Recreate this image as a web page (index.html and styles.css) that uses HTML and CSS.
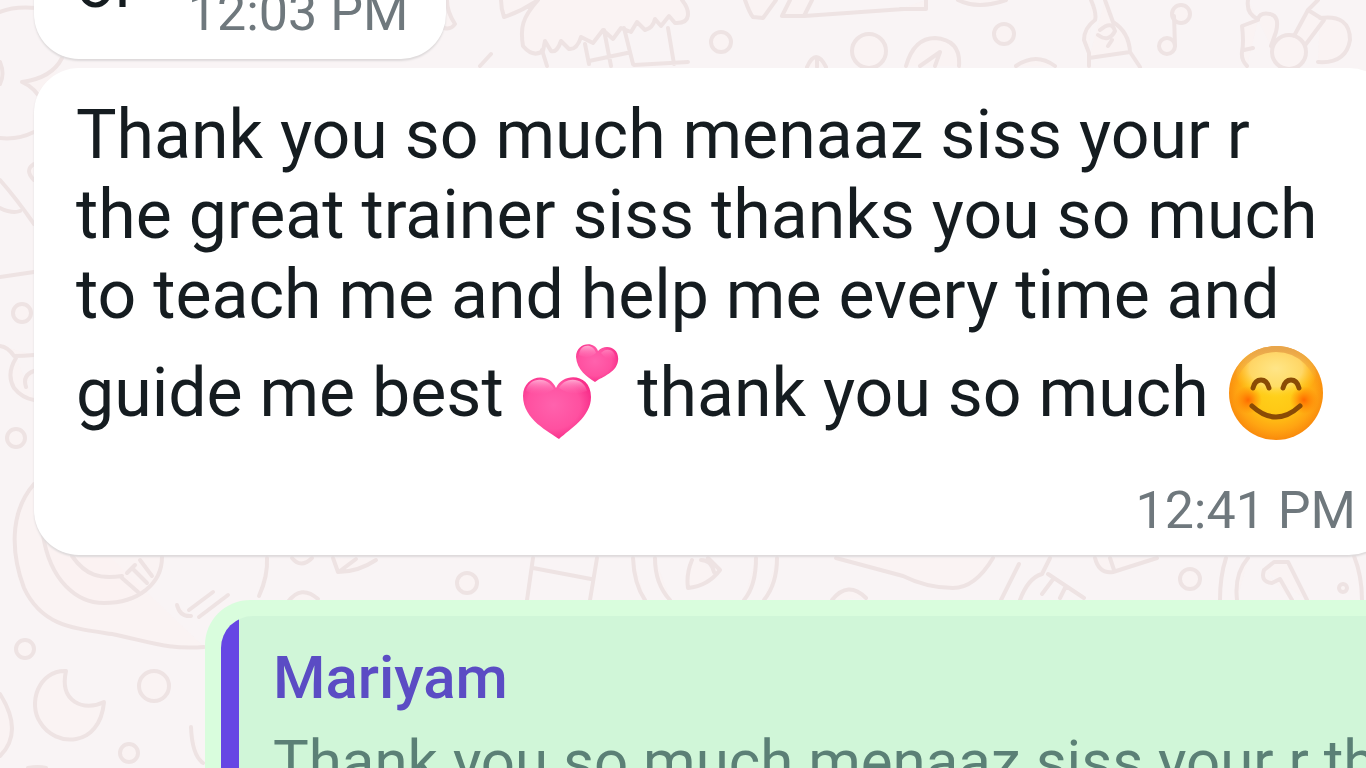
FILE: index.html
```
<!DOCTYPE html>
<html lang="en">
  <head>
    <meta charset="utf-8" />
    <meta name="viewport" content="width=device-width, initial-scale=1" />
    <title>Chat</title>

    <link rel="stylesheet" href="styles.css">
  </head>

  <body>
    <!-- wallpaper -->
    <svg class="wallpaper" viewBox="0 0 1366 768" preserveAspectRatio="xMinYMin slice" aria-hidden="true">
      <!-- left edge -->
      <path d="M0 12Q14 6 36 8M0 62q5 12 0 22M62 58Q52 78 22 82q14 6 20 20" />
      <path d="M0 138q18 2 34-6M34 164q-10 6 0 16M0 180q16 18 34 44M0 208q12 6 20 3M0 277l34-5" />
      <circle cx="22" cy="313" r="9" />
      <path d="M0 346q8 1 14 10q10 0 20-1M16 358q-10 16-2 30q8 10 20 12M34 371q-12 4-8 16" />
      <circle cx="16" cy="438" r="9" />
      <path d="M34 484C8 514 12 556 24 588C42 626 72 628 112 634C150 642 170 650 204 647" />
      <path d="M43 535C50 580 76 603 104 603C138 603 162 584 162 557M72 556C86 576 100 579 122 576M122 578l16 14M132 568l15 15M140 560l12 16M127 573l8 -8" />
      <path d="M177 605q3 12 14 11M189 610l24-18M199 617l29-22" />
      <path d="M267 558q1 18-8 38M288 602q13-18 30-3M292 558q9 11 20 0M333 558l5 14q20 0 38-12M340 571l16-12" />
      <!-- bottom left -->
      <circle cx="25" cy="649" r="9" />
      <circle cx="154" cy="686" r="15" />
      <circle cx="129" cy="753" r="9" />
      <path d="M66 671C38 670 28 704 40 722C55 748 100 748 104 702C84 712 59 702 66 671Z" />
      <path d="M0 694q24 38 0 62M191 727q1 28 12 36M28 768q10-2 18 0" />
      <!-- top strip -->
      <path d="M447 0q0 12 8 24q-4 6-11 4M501 0q0 8 3 17q18-6 34-17M538 0C522 18 520 28 523 46q10 12 20 5l2-10l6 10q6 2 10-10l8 8q8 1 12-12l12 6l10-13l10 9l8-11l10 4l6-10l8 8q8-2 10-11l6 7l8-10l6 7C692 24 690 10 682 0M542 50l5 16M585 44l4 20M604 30l7 36M624 28l9 36M668 28l6 36M589 61l38-8M634 65l54-3M480 66l11-12" />
      <path d="M745 0q5 14 8 17l10 1l13-18M790 0l-8 16h22l8-16M804 16l100-7M900 9h26V0M958 0q20 10 48 0" />
      <circle cx="721" cy="42" r="10" />
      <circle cx="869" cy="51" r="17" />
      <circle cx="1004" cy="34" r="10" />
      <path d="M807 67q9-20 19 0M906 66q8-28 29-28q26 2 24 28M920 66l20-14l-5 14M1016 66q20-14 39 0M817 59v8" />
      <path d="M1091 0q6 14 4 20q-11 8-11 20l5 13v13M1105 0l8 22q16 10 17 30l-41 6M1130 52l10 15M1100 30q12-10 15 1q-6 12-17 4M1108 46l4-6" />
      <circle cx="1181" cy="14" r="9" />
      <circle cx="1167" cy="46" r="8" />
      <path d="M1175 46l-1-30M1248 0q-2 14 10 19q2-7 12-5q10 2 6 18l-5 14M1258 20l-16 6q2 16 0 26q-1 8 5 14M1244 50l9-2M1294 36l14-26l16 10l-18 24M1308 10l10-10M1320 18q30-4 30 22q-4 24-32 22" />
      <circle cx="1289" cy="52" r="17" />
      <!-- strip between the bubbles -->
      <circle cx="467" cy="583" r="10" />
      <path d="M533 558l-6 42M533 568l58 11M597 558l-7 42M633 558q1 26 12 42M655 558q0 26 15 42M756 558q0 28-12 42M777 558q0 26-13 42M692 560q-6 14-4 28q20-2 32-18l-12-12M836 558l67 18q24 12 50 12q22 0 40-30M832 600q16-20 34-2M701 560q10 0 13 12" />
      <path d="M1019 564l-18 36M1050 558l-8 16q-14 4-22 26M1048 574l36 24M1054 578l-12 16M1066 586l-6 12M1095 558q4 16 18 14l44-14M1110 558l4 12M1226 558q-6 18-6 42M1248 558q-14 16-11 42M1264 570q-4 12 8 13l8-4l12 21M1264 570l10-8h14l19 38M1354 556q8 20 8 44" />
      <circle cx="1190" cy="579" r="10" />
      <circle cx="1343" cy="588" r="4" />
    </svg>

    <main class="chat">
      <article class="msg msg--in msg--short">
        <p class="text">or</p>
        <time class="time">12:03 PM</time>
      </article>

      <article class="msg msg--in msg--long">
        <p class="text">
          Thank you so much menaaz siss your r<br />
          the great trainer siss thanks you so much<br />
          to teach me and help me every time and<br />
          guide me best
          <svg class="emoji" viewBox="0 0 98 98" role="img" aria-label="Two hearts">
            <defs>
              <radialGradient id="heart" cx="45%" cy="45%" r="65%">
                <stop offset="0" stop-color="#ff62ad" />
                <stop offset="0.6" stop-color="#ff50a0" />
                <stop offset="1" stop-color="#f51f80" />
              </radialGradient>
              <linearGradient id="heart-shine" x1="0" y1="0" x2="0" y2="1">
                <stop offset="0" stop-color="#ffabd3" />
                <stop offset="1" stop-color="#ff62ad" stop-opacity="0" />
              </linearGradient>
            </defs>
            <path fill="url(#heart)" d="M37 96C28 89 1 77 1 53C1 32 27 28 34 45C41 29 69 30 69 54C69 74 48 86 37 96Z" />
            <path fill="url(#heart-shine)" d="M4 48C7 34 25 33 32 46Q18 56 4 48ZM37 45C43 33 62 34 65 48Q50 54 37 45Z" />
            <path fill="url(#heart)" d="M73 39C65 34 55 27 54 14C54 0 72-3 76 8C83 0 98 4 96 18C94 30 81 33 73 39Z" />
            <path fill="url(#heart-shine)" d="M57 12C58 0 71 0 74 10Q66 17 57 12ZM79 10C84 4 94 6 93 16Q85 18 79 10Z" />
          </svg>
          thank you so much
          <svg class="emoji" viewBox="0 0 98 98" role="img" aria-label="Smiling face">
            <defs>
              <radialGradient id="face" cx="50%" cy="48%" r="52%">
                <stop offset="0" stop-color="#ffd21c" />
                <stop offset="0.45" stop-color="#ffc815" />
                <stop offset="0.8" stop-color="#ffa412" />
                <stop offset="1" stop-color="#f98a0c" />
              </radialGradient>
              <radialGradient id="face-shine" cx="50%" cy="40%" r="55%">
                <stop offset="0" stop-color="#ffe588" />
                <stop offset="0.6" stop-color="#ffe07a" stop-opacity="0.8" />
                <stop offset="1" stop-color="#ffd21c" stop-opacity="0" />
              </radialGradient>
              <radialGradient id="cheek">
                <stop offset="0" stop-color="#ff6a00" />
                <stop offset="1" stop-color="#ff7d00" stop-opacity="0" />
              </radialGradient>
              <linearGradient id="rim" x1="0" y1="0" x2="0" y2="1">
                <stop offset="0" stop-color="#e8a64c" />
                <stop offset="0.4" stop-color="#f5a02a" stop-opacity="0" />
              </linearGradient>
            </defs>
            <circle cx="49" cy="50" r="47" fill="url(#face)" />
            <ellipse cx="49" cy="31" rx="40" ry="27" fill="url(#face-shine)" />
            <circle cx="49" cy="50" r="44" fill="none" stroke="url(#rim)" stroke-width="6" />
            <circle cx="21" cy="57" r="14" fill="url(#cheek)" />
            <circle cx="77" cy="57" r="14" fill="url(#cheek)" />
            <path class="face-line" d="M26 45Q28 37 34 37Q40 37 42 45M56 45Q58 37 64 37Q70 37 72 45" />
            <path class="face-line" d="M25 63Q49 85 73 63" />
          </svg>
        </p>
        <time class="time">12:41 PM</time>
      </article>

      <article class="msg msg--out">
        <blockquote class="quote">
          <p class="quote-name">Mariyam</p>
          <p class="quote-text">Thank you so much menaaz siss your r the great trainer siss</p>
        </blockquote>
      </article>
    </main>
  </body>
</html>
```
FILE: styles.css
```
* {
  box-sizing: border-box;
}

body {
  margin: 0;
  height: 100vh;
  overflow: hidden;
  background-color: #f9f4f5;
  font-family: Roboto, 'Noto Sans', sans-serif;
  color: #151c20;
}

p,
blockquote {
  margin: 0;
}

/* the doodles lie behind the whole chat */
.wallpaper {
  position: absolute;
  z-index: -1;
  width: 100%;
  height: 100%;
  fill: #fcf1f1;
  fill-opacity: 0.5;
  stroke: #eee3e3;
  stroke-width: 4;
  stroke-linecap: round;
  stroke-linejoin: round;
}

/* scrolled so that the first message is cut by the top edge */
.chat {
  display: flex;
  flex-direction: column;
  align-items: flex-start;
  margin-top: -83px;
  padding-left: 34px;
}

.msg {
  border-radius: 45px;
}

.msg--in {
  padding: 27px 38px 14px 42px;
  background-color: #fff;
  box-shadow: 0 2px 2px #dedadb;
}

.msg--short {
  display: flex;
  align-items: flex-end;
  gap: 50px;
  margin-bottom: 9px;
  padding-bottom: 16px;
}

.msg--short .text {
  margin-bottom: 19px;
}

/* wider than the window, runs past its right edge */
.msg--long {
  align-self: stretch;
  margin-right: -28px;
  margin-bottom: 45px;
}

.text {
  font-size: 68px;
  line-height: 80px;
  white-space: nowrap;
}

.emoji {
  width: 100px;
  height: 98px;
  margin-top: 8px;
  vertical-align: -25px;
}

.face-line {
  fill: none;
  stroke: #8a4b05;
  stroke-width: 5;
  stroke-linecap: round;
}

.time {
  display: block;
  font-size: 52px;
  line-height: 60px;
  color: #6f787d;
}

.msg--long .time {
  margin-top: 40px;
  text-align: right;
}

.msg--out {
  align-self: stretch;
  margin-left: 171px;
  margin-right: -60px;
  padding: 16px;
  background-color: #d9fddd;
}

/* the bar on the left keeps a straight inner edge */
.quote {
  overflow: hidden;
  padding: 20px 36px 20px 52px;
  border-radius: 32px;
  background: linear-gradient(to right, #6646e4 18px, #d0f6d8 18px);
  line-height: 84px;
  white-space: nowrap;
}

.quote-name {
  font-size: 60px;
  font-weight: 500;
  color: #5b4cc4;
}

.quote-text {
  font-size: 60px;
  color: #5b8076;
}
```
